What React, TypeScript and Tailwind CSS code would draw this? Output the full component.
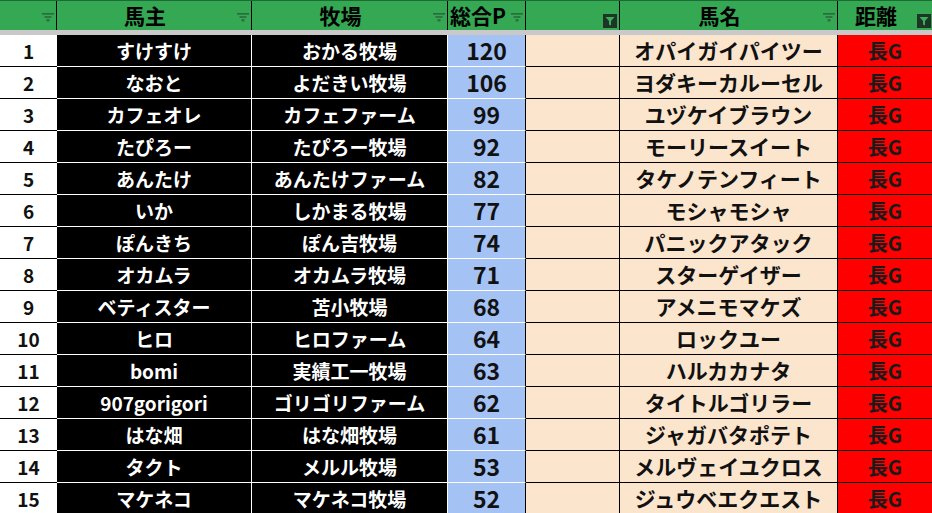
const rows: [number, string, string, number, string][] = [
  [1, "すけすけ", "おかる牧場", 120, "オパイガイパイツー"],
  [2, "なおと", "よだきい牧場", 106, "ヨダキーカルーセル"],
  [3, "カフェオレ", "カフェファーム", 99, "ユヅケイブラウン"],
  [4, "たぴろー", "たぴろー牧場", 92, "モーリースイート"],
  [5, "あんたけ", "あんたけファーム", 82, "タケノテンフィート"],
  [6, "いか", "しかまる牧場", 77, "モシャモシャ"],
  [7, "ぽんきち", "ぽん吉牧場", 74, "パニックアタック"],
  [8, "オカムラ", "オカムラ牧場", 71, "スターゲイザー"],
  [9, "ベティスター", "苫小牧場", 68, "アメニモマケズ"],
  [10, "ヒロ", "ヒロファーム", 64, "ロックユー"],
  [11, "bomi", "実績工一牧場", 63, "ハルカカナタ"],
  [12, "907gorigori", "ゴリゴリファーム", 62, "タイトルゴリラー"],
  [13, "はな畑", "はな畑牧場", 61, "ジャガバタポテト"],
  [14, "タクト", "メルル牧場", 53, "メルヴェイユクロス"],
  [15, "マケネコ", "マケネコ牧場", 52, "ジュウベエクエスト"],
];

const font = { fontFamily: '"Noto Sans CJK JP", "Noto Sans", sans-serif' };

// plain dropdown arrow of an unfiltered column
function FilterIcon() {
  return (
    <svg width="12" height="9" viewBox="0 0 12 9" className="mt-[4px]">
      <rect x="0" y="0" width="12" height="1.6" fill="#2b6a3c" />
      <rect x="2.5" y="3.2" width="7" height="1.6" fill="#2b6a3c" />
      <rect x="4.5" y="6.2" width="3" height="2.2" fill="#2b6a3c" />
    </svg>
  );
}

// dark button of a filtered column
function ActiveFilter() {
  return (
    <div className="w-[14px] h-[14px] mt-[10px] bg-[#1c3524] flex items-center justify-center">
      <svg width="10" height="10" viewBox="0 0 10 10">
        <path d="M0.5 1 H9.5 L6 5 V9.5 L4 8.5 V5 Z" fill="#3fae5c" />
      </svg>
    </div>
  );
}

function HeadCell({ w, label, active, left }: { w: string; label?: string; active?: boolean; left?: boolean }) {
  return (
    <div className={`${w} h-full flex items-center border-r border-black`}>
      <div className={`flex-1 flex items-center ${left ? "justify-start pl-[2px]" : "justify-center"} text-[21px] font-bold text-black leading-none whitespace-nowrap`}>
        {label}
      </div>
      <div className="w-[18px] h-full flex items-center justify-end pr-[2px]">
        {active ? <ActiveFilter /> : <FilterIcon />}
      </div>
    </div>
  );
}

export default function App() {
  return (
    <div className="w-[932px] h-[513px] overflow-hidden bg-white" style={font}>
      {/* header */}
      <div className="flex h-[30px] bg-[#34a853] border-t border-[#1e6a35]">
        <HeadCell w="w-[57px]" />
        <HeadCell w="w-[195px]" label="馬主" />
        <HeadCell w="w-[196px]" label="牧場" />
        <HeadCell w="w-[78px]" label="総合P" left />
        <HeadCell w="w-[94px]" active />
        <HeadCell w="w-[218px]" label="馬名" />
        <div className="w-[94px] h-full flex items-center">
          <div className="flex-1 flex items-center justify-center text-[21px] font-bold text-black leading-none">距離</div>
          <div className="w-[18px] h-full flex items-center justify-end pr-[1px]">
            <ActiveFilter />
          </div>
        </div>
      </div>
      <div className="h-[5px] bg-[#c9c9c9]" />

      {rows.map(([no, owner, farm, pts, horse]) => (
        <div key={no} className="flex h-[32px] font-bold leading-none">
          <div className="w-[57px] flex items-center justify-center border-b border-black bg-white text-[19px] text-[#111]">
            {no}
          </div>
          <div className="w-[195px] flex items-center justify-center border-b border-r border-white bg-black text-[19px] text-white whitespace-nowrap">
            {owner}
          </div>
          <div className="w-[196px] flex items-center justify-center border-b border-r border-white bg-black text-[19px] text-white whitespace-nowrap">
            {farm}
          </div>
          <div className="w-[78px] flex items-center justify-center border-b border-r border-b-white border-r-black bg-[#a4c2f4] text-[23px] text-[#111]">
            {pts}
          </div>
          <div className="w-[94px] border-b border-r border-black bg-[#fce5cd]" />
          <div className="w-[218px] flex items-center justify-center border-b border-r border-black bg-[#fce5cd] text-[21px] text-[#111] whitespace-nowrap">
            {horse}
          </div>
          <div className="w-[94px] flex items-center justify-center border-b border-black bg-[#ff0000] text-[20px] text-[#1a1a1a]">
            長G
          </div>
        </div>
      ))}
    </div>
  );
}
